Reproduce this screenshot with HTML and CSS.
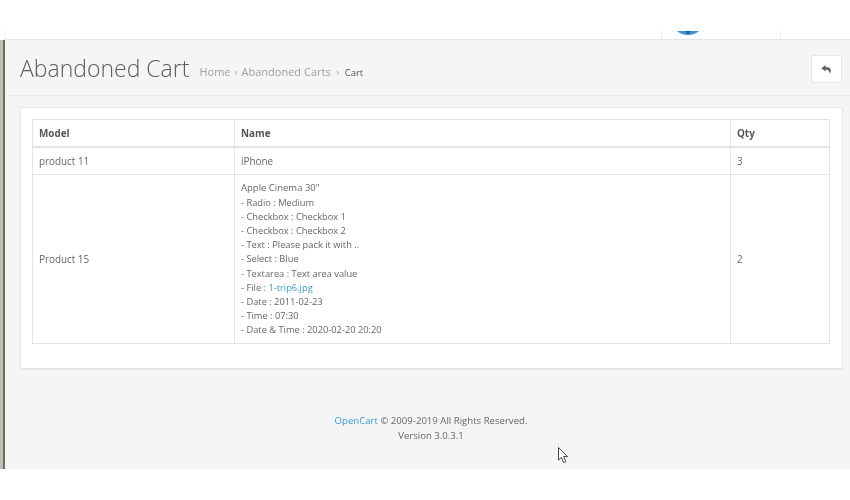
FILE: index.html
```html
<!DOCTYPE html>
<html lang="en">
<head>
<meta charset="utf-8">
<title>Abandoned Cart</title>
<link rel="stylesheet" href="styles.css">
</head>
<body>
<header class="topbar">
  <div class="topbar-edge"></div>
  <div class="topbar-tab">
    <svg class="avatar" width="22" height="4" viewBox="0 0 22 4" aria-hidden="true"><path d="M0 0H22C19 2.6 15 4 11 4S3 2.6 0 0Z" fill="#3f8fd6"/><path d="M8 0H14L11 3.4Z" fill="#1f5f9e"/></svg>
  </div>
</header>
<div class="shell">
  <div class="rail"></div>
  <main class="content">
    <div class="page-header">
      <div class="heading">
        <h1>Abandoned Cart</h1>
        <ul class="crumbs">
          <li><a href="#">Home</a></li>
          <li><a href="#">Abandoned Carts</a></li>
          <li class="current"><a href="#">Cart</a></li>
        </ul>
      </div>
      <a class="back" href="#" aria-label="Back">
        <svg width="11" height="9" viewBox="0 0 11 9" aria-hidden="true"><path d="M4.6 0 0.4 3.2 4.6 6.4V4.4C7 4.3 8.4 5.4 9 9 10.8 4.8 10.2 1.9 4.6 1.9Z" fill="#5f5f5f"/></svg>
      </a>
    </div>
    <section class="panel">
      <table>
        <thead>
          <tr><th class="c-model">Model</th><th class="c-name">Name</th><th>Qty</th></tr>
        </thead>
        <tbody>
          <tr><td>product 11</td><td>iPhone</td><td>3</td></tr>
          <tr class="detail-row">
            <td>Product 15</td>
            <td>
              <div class="product">Apple Cinema 30"</div>
              <div class="option">- Radio : Medium</div>
              <div class="option">- Checkbox : Checkbox 1</div>
              <div class="option">- Checkbox : Checkbox 2</div>
              <div class="option">- Text : Please pack it with ..</div>
              <div class="option">- Select : Blue</div>
              <div class="option">- Textarea : Text area value</div>
              <div class="option">- File : <a href="#">1-trip6.jpg</a></div>
              <div class="option">- Date : 2011-02-23</div>
              <div class="option">- Time : 07:30</div>
              <div class="option">- Date &amp; Time : 2020-02-20 20:20</div>
            </td>
            <td>2</td>
          </tr>
        </tbody>
      </table>
    </section>
    <footer class="footer">
      <div><a href="#">OpenCart</a> © 2009-2019 All Rights Reserved.</div>
      <div>Version 3.0.3.1</div>
    </footer>
    <svg class="cursor" width="11" height="17" viewBox="0 0 11 17" aria-hidden="true"><path d="M0.5 0.5V13L3.4 10.4 5.6 15.6 7.8 14.6 5.6 9.6H9.6Z" fill="#fff" stroke="#333" stroke-width="0.9"/></svg>
  </main>
</div>
</body>
</html>
```
FILE: styles.css
```css
* { box-sizing: border-box; }
html, body { margin: 0; padding: 0; background: #fff; }
body {
  width: 850px;
  height: 500px;
  overflow: hidden;
  font-family: "Open Sans", sans-serif;
  font-size: 9.9px;
  line-height: 14.2px;
  color: #666;
}
a { color: #3a9bd5; text-decoration: none; }

.topbar {
  height: 39px;
  display: flex;
  justify-content: space-between;
  align-items: flex-end;
  padding: 0 69px 0 4px;
}
.topbar-edge {
  width: 1px;
  height: 8px;
  background: #f2f2f2;
}
.topbar-tab {
  width: 120px;
  height: 9px;
  border-left: 1px solid #eee;
  border-right: 1px solid #eee;
  display: flex;
  padding-left: 15px;
  align-items: flex-start;
  padding-top: 1px;
}
.avatar { display: block; }

.shell { display: flex; height: 430px; }
.rail {
  width: 5px;
  flex: none;
  background: linear-gradient(to right, #c4bdb2 0, #c4bdb2 3px, #6d6a68 3px, #6d6a68 5px);
  margin-top: 1px;
}
.content {
  position: relative;
  flex: 1;
  background: #f5f5f5;
  border-top: 1px solid #e6e6e6;
  filter: blur(0.3px);
}

.page-header {
  height: 56px;
  border-bottom: 1px solid #e9e9e9;
  padding: 15px 9px 0 15px;
  display: flex;
  justify-content: space-between;
  align-items: flex-start;
}
.heading { display: flex; align-items: flex-end; margin-top: -1px; }
h1 {
  margin: 0;
  font-size: 23px;
  line-height: 29px;
  font-weight: 300;
  color: #5c5c5c;
}
.crumbs {
  list-style: none;
  display: flex;
  margin: 0 0 3px 10px;
  padding: 0;
  font-size: 11px;
  line-height: 14px;
}
.crumbs li + li::before {
  content: "›";
  color: #aaa;
  padding: 0 4px;
  font-size: 10px;
}
.crumbs .current::before { padding: 0 5.5px; }
.crumbs a { color: #a0a0a0; }
.crumbs .current a { color: #555; font-size: 9.5px; }
.back {
  width: 31px;
  height: 28px;
  background: #fff;
  border: 1px solid #e6e6e6;
  border-radius: 2px;
  display: flex;
  align-items: center;
  justify-content: center;
}

.panel {
  margin: 11px 8px 0 15px;
  height: 263px;
  background: #fff;
  border: 1px solid #e6e6e6;
  border-bottom-width: 2px;
  padding: 11px 12px 0 11px;
}
table {
  width: 798px;
  border-collapse: collapse;
  table-layout: fixed;
}
th, td {
  border: 1px solid #e3e3e3;
  padding: 6px;
  text-align: left;
  vertical-align: middle;
  font-weight: 400;
}
th {
  font-weight: 700;
  color: #555;
  border-bottom-width: 2px;
  height: 27px;
}
td { height: 27px; }
.detail-row td { padding-bottom: 5px; }
.c-model { width: 202px; }
.c-name { width: 496px; }
.product { font-size: 9.5px; }
.option { font-size: 9.3px; }

.footer {
  margin-top: 44px;
  padding-left: 6px;
  text-align: center;
  font-size: 9.6px;
  line-height: 14.5px;
}
.cursor { position: absolute; left: 553px; top: 407px; }
```
